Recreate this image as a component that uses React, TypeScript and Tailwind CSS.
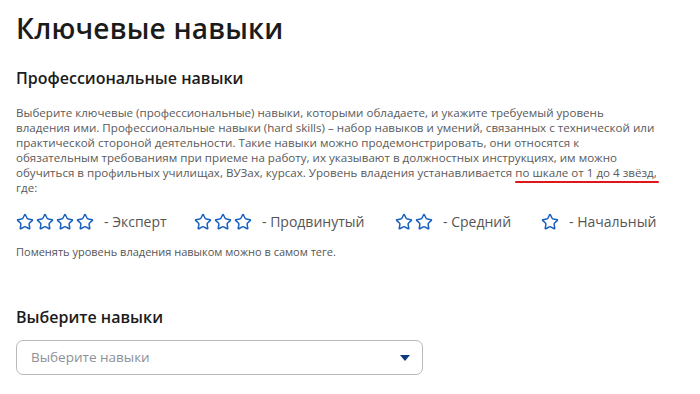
import React from "react";
import { Star } from "lucide-react";

const levels = [
  { count: 4, label: "- Эксперт", width: "w-[178px]" },
  { count: 3, label: "- Продвинутый", width: "w-[201px]" },
  { count: 2, label: "- Средний", width: "w-[146px]" },
  { count: 1, label: "- Начальный", width: "" },
];

function Stars({ count }: { count: number }) {
  return (
    <div className="flex items-center gap-[2px]">
      {Array.from({ length: count }).map((_, i) => (
        <Star key={i} className="h-[18px] w-[18px] text-[#1760c0]" strokeWidth={2} />
      ))}
    </div>
  );
}

export default function App() {
  return (
    <div className="w-[700px] h-[394px] bg-white px-4 pt-[10px] font-['Open_Sans',sans-serif] overflow-hidden">
      <h1 className="text-[28px] leading-[36px] font-semibold text-[#1b1b1b] tracking-[0.2px]">Ключевые навыки</h1>

      <h2 className="mt-[21px] text-[16px] leading-[22px] font-semibold text-[#1b1b1b]">Профессиональные навыки</h2>

      {/* Description */}
      <div className="mt-[16px] text-[11.6px] leading-[15px] text-[#5a5a5a]">
        <p>Выберите ключевые (профессиональные) навыки, которыми обладаете, и укажите требуемый уровень</p>
        <p>владения ими. Профессиональные навыки (hard skills) – набор навыков и умений, связанных с технической или</p>
        <p>практической стороной деятельности. Такие навыки можно продемонстрировать, они относятся к</p>
        <p>обязательным требованиям при приеме на работу, их указывают в должностных инструкциях, им можно</p>
        <p>
          обучиться в профильных училищах, ВУЗах, курсах. Уровень владения устанавливается{" "}
          <span className="relative">
            по шкале от 1 до 4 звёзд,
            <span className="absolute left-0 right-[-2px] bottom-[-3px] h-[2px] rounded-full bg-[#e0161b]" />
          </span>
        </p>
        <p>где:</p>
      </div>

      {/* Levels */}
      <div className="mt-[16px] flex items-center">
        {levels.map((l) => (
          <div key={l.label} className={`flex items-center gap-[10px] ${l.width}`}>
            <Stars count={l.count} />
            <span className="text-[14px] text-[#555]">{l.label}</span>
          </div>
        ))}
      </div>

      <p className="mt-[12px] text-[11px] leading-[16px] text-[#555]">Поменять уровень владения навыком можно в самом теге.</p>

      <h3 className="mt-[46px] text-[16px] leading-[22px] font-semibold text-[#1b1b1b]">Выберите навыки</h3>

      <div className="mt-[12px] w-[407px] h-[35px] rounded-[7px] border border-[#b9b9b9] flex items-center justify-between pl-[14px] pr-[12px]">
        <span className="text-[13.5px] text-[#8e9096]">Выберите навыки</span>
        <svg width="10" height="6" viewBox="0 0 10 6">
          <path d="M0 0 L10 0 L5 6 Z" fill="#0d3a7e" />
        </svg>
      </div>
    </div>
  );
}
